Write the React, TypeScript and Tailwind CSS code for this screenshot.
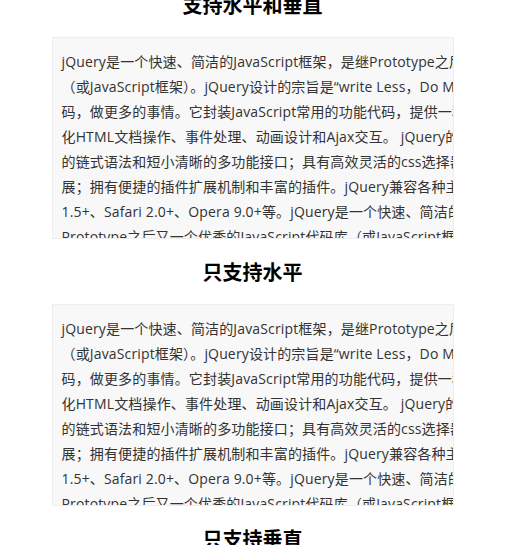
const lines = [
  'jQuery是一个快速、简洁的JavaScript框架，是继Prototype之后又一个优秀的JavaScript代码库',
  '（或JavaScript框架）。jQuery设计的宗旨是“write Less，Do More”，即倡导写更少的代',
  '码，做更多的事情。它封装JavaScript常用的功能代码，提供一种简便的JavaScript设计模式，优',
  '化HTML文档操作、事件处理、动画设计和Ajax交互。 jQuery的核心特性可以总结为：具有独特',
  '的链式语法和短小清晰的多功能接口；具有高效灵活的css选择器，并且可对CSS选择器进行扩',
  '展；拥有便捷的插件扩展机制和丰富的插件。jQuery兼容各种主流浏览器，如IE 6.0+、FF',
  '1.5+、Safari 2.0+、Opera 9.0+等。jQuery是一个快速、简洁的JavaScript框架，是继',
  'Prototype之后又一个优秀的JavaScript代码库（或JavaScript框架）。jQuery设计的宗旨是',
  '“write Less，Do More”，即倡导写更少的代码，做更多的事情。',
];

function Section({ title }: { title: string }) {
  return (
    <section>
      <h2 className="h-[30px] pt-px text-center text-[20px] leading-[30px] font-bold text-black">{title}</h2>
      <div className="mx-auto mt-[17px] mb-[18px] h-[202px] w-[402px] overflow-hidden border border-[#eeeeee] bg-[#f8f8f8] px-[9px] pt-[11px] text-[14px] leading-[25px] tracking-[0.15px] text-[#333333]">
        {lines.map((line, i) => (
          <div key={i} className="whitespace-nowrap">
            {line}
          </div>
        ))}
      </div>
    </section>
  );
}

export default function App() {
  return (
    <div
      className="h-[545px] w-[518px] overflow-hidden bg-white"
      style={{ fontFamily: '"Open Sans", "Noto Sans CJK SC", sans-serif' }}
    >
      <div className="mt-[-10px] w-[505px]">
        <Section title="支持水平和垂直" />
        <Section title="只支持水平" />
        <Section title="只支持垂直" />
      </div>
    </div>
  );
}
